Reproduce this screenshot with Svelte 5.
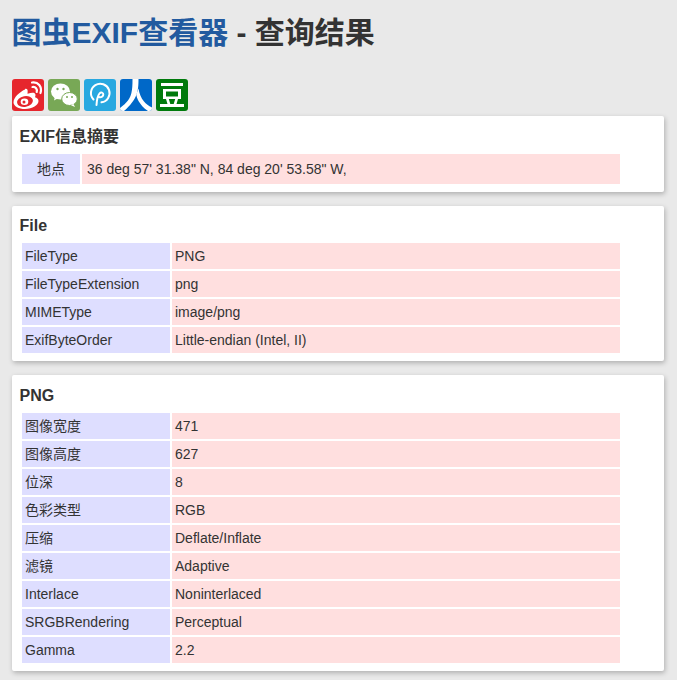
<script>
  const sections = [
    {
      title: 'File',
      rows: [
        ['FileType', 'PNG'],
        ['FileTypeExtension', 'png'],
        ['MIMEType', 'image/png'],
        ['ExifByteOrder', 'Little-endian (Intel, II)']
      ]
    },
    {
      title: 'PNG',
      rows: [
        ['图像宽度', '471'],
        ['图像高度', '627'],
        ['位深', '8'],
        ['色彩类型', 'RGB'],
        ['压缩', 'Deflate/Inflate'],
        ['滤镜', 'Adaptive'],
        ['Interlace', 'Noninterlaced'],
        ['SRGBRendering', 'Perceptual'],
        ['Gamma', '2.2']
      ]
    }
  ];
</script>

<div class="page">
  <h1><a href="#top">图虫EXIF查看器</a> - 查询结果</h1>

  <div class="share">
    <a href="#weibo" class="icon weibo" aria-label="微博">
      <svg viewBox="0 0 32 32" width="32" height="32">
        <path d="M13 10.500C7.500 13 1.500 18.500 1.500 23.500c0 3.800 5.500 6.500 11.500 6.500 7.500 0 13.500-4 13.500-8 0-2.200-1.800-3.300-3.500-3.800.7-1.600.8-3.200-.4-4-1.600-1-4.300-.4-6 .4-1 .4-1.200 0-1-1.200.5-3.400-1.100-4-2.600-3.400z" fill="#fff"/>
        <ellipse cx="13" cy="22.500" rx="8" ry="5.400" fill="#e6262d" transform="rotate(-10 13 22.500)"/>
        <ellipse cx="12.500" cy="22.700" rx="3.800" ry="3.200" fill="#fff"/>
        <circle cx="12" cy="23" r="1.500" fill="#e6262d"/>
        <path d="M20 3.500c6-1 10.500 4 8.500 10.500M20.500 8c3.200-.4 5 2 4.200 5" fill="none" stroke="#fff" stroke-width="2.200" stroke-linecap="round"/>
      </svg>
    </a>
    <a href="#wechat" class="icon wechat" aria-label="微信">
      <svg viewBox="0 0 32 32" width="32" height="32">
        <ellipse cx="12.500" cy="12.500" rx="9.500" ry="8" fill="#fff"/>
        <path d="M7 17.500l-1 4 4.500-2.500z" fill="#fff"/>
        <ellipse cx="21.500" cy="20" rx="7.800" ry="6.500" fill="#fff" stroke="#78a856" stroke-width="1"/>
        <path d="M25.500 25l1.500 3-4-1.800z" fill="#fff"/>
        <circle cx="9.500" cy="10" r="1.200" fill="#78a856"/>
        <circle cx="15.500" cy="10" r="1.200" fill="#78a856"/>
        <circle cx="19" cy="18" r="1" fill="#78a856"/>
        <circle cx="24" cy="18" r="1" fill="#78a856"/>
      </svg>
    </a>
    <a href="#qzone" class="icon pond" aria-label="分享">
      <svg viewBox="0 0 32 32" width="32" height="32" fill="none" stroke="#fff" stroke-linecap="round">
        <path d="M9.500 20.500a9.300 9.300 0 1 1 8 2.800" stroke-width="2"/>
        <path d="M12.500 26c.3-5 1-9 3-11.500 1.500-1.800 4-1 3.800 1.200-.2 2-2.500 3-4.300 2.300" stroke-width="2"/>
      </svg>
    </a>
    <a href="#renren" class="icon renren" aria-label="人人">
      <svg viewBox="0 0 32 32" width="32" height="32" fill="#fff">
        <path d="M12.500 0h6c0 7-.4 11-2 15.500-1.800 5-6 11-12.500 16.500H0v-3c7-5 10.500-10 11.500-15.500.8-3.500 1-7.500 1-13.500z"/>
        <path d="M18.500 9.500c.8 5 2.500 9.500 5.500 13 2 2.300 4.500 4.300 8 6v3.500h-4c-4.500-3-7.500-6.500-9.500-10-1.200-2.500-2-4.500-2.200-6.500z"/>
      </svg>
    </a>
    <a href="#douban" class="icon douban" aria-label="豆瓣">
      <svg viewBox="0 0 32 32" width="32" height="32" fill="#fff">
        <rect x="5" y="4" width="22" height="3"/>
        <path d="M7 10h18v10H7zM10 12.500v5h12v-5z" fill-rule="evenodd"/>
        <rect x="4" y="25" width="24" height="3"/>
        <path d="M10 20h2.800l1.500 5h-2.800zM19.200 20H22l-1.500 5h-2.800z"/>
      </svg>
    </a>
  </div>

  <section class="card">
    <h2>EXIF信息摘要</h2>
    <table class="summary">
      <tbody>
        <tr>
          <th>地点</th>
          <td>36 deg 57' 31.38" N, 84 deg 20' 53.58" W,</td>
        </tr>
      </tbody>
    </table>
  </section>

  {#each sections as section}
    <section class="card">
      <h2>{section.title}</h2>
      <table>
        <tbody>
          {#each section.rows as row}
            <tr>
              <th>{row[0]}</th>
              <td>{row[1]}</td>
            </tr>
          {/each}
        </tbody>
      </table>
    </section>
  {/each}
</div>

<style>
  :global(body) {
    background: #e9e9e9;
    color: #333;
    font-family: "Liberation Sans", "Noto Sans CJK SC", Arial, sans-serif;
    font-size: 14px;
  }

  .page {
    padding: 0 13px 9px 12px;
  }

  h1 {
    margin: 0 0 0 -0.5px;
    padding-top: 16px;
    height: 79px;
    box-sizing: border-box;
    font-size: 30px;
    line-height: 34px;
    font-weight: bold;
  }

  h1 a {
    color: #225a9f;
    text-decoration: none;
  }

  .share {
    display: flex;
    gap: 4px;
    height: 37px;
  }

  .icon {
    display: block;
    width: 32px;
    height: 32px;
    border-radius: 3px;
    overflow: hidden;
  }

  .icon svg {
    display: block;
  }

  .weibo { background: #e6262d; }
  .wechat { background: #78a856; }
  .pond { background: #28a8e0; }
  .renren { background: #0068c8; }
  .douban { background: #007a0c; }

  .card {
    background: #fff;
    border-radius: 2px;
    box-shadow: 1px 2px 5px rgba(0, 0, 0, 0.25);
    padding: 8px 8px 6px;
    margin-bottom: 14px;
  }

  h2 {
    margin: 0 0 3px -0.5px;
    padding-top: 0.5px;
    font-size: 16px;
    line-height: 24px;
    font-weight: bold;
  }

  table {
    width: 602px;
    border-collapse: separate;
    border-spacing: 2px;
    table-layout: fixed;
    font-size: 14px;
    line-height: 16px;
  }

  th {
    width: 140px;
    height: 26px;
    padding: 0 5px 0 3px;
    background: #dedeff;
    font-weight: normal;
    text-align: left;
    white-space: nowrap;
  }

  td {
    height: 26px;
    padding: 0 3px;
    background: #ffdfdf;
  }

  .summary th {
    width: 58px;
    height: 30px;
    padding: 0;
    text-align: center;
    box-sizing: border-box;
  }

  .summary td {
    height: 30px;
    padding: 0 5px;
  }
</style>
